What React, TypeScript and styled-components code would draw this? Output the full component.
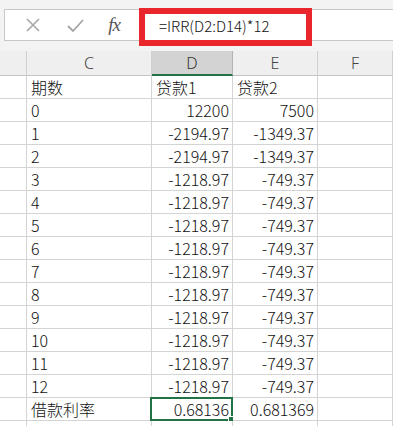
import React from "react";
import styled, { createGlobalStyle } from "styled-components";

const GlobalStyle = createGlobalStyle`
  html, body {
    margin: 0;
    padding: 0;
    background: #f3f3f3;
    font-family: "Noto Sans CJK SC", "Noto Sans", sans-serif;
  }
`;

const Page = styled.div`
  width: 393px;
  height: 426px;
  overflow: hidden;
  background: #f3f3f3;
  position: relative;
`;

const FormulaBar = styled.div`
  margin: 9px 0 0 4px;
  height: 30px;
  display: flex;
  align-items: center;
  background: #fff;
  border: 1px solid #c8c8c8;
  border-right: none;
`;

const IconSlot = styled.div<{ w: number }>`
  width: ${(p) => p.w}px;
  display: flex;
  justify-content: center;
  align-items: center;
  color: #a6a6a6;
`;

const Fx = styled.span`
  font-family: "Liberation Serif", "DejaVu Serif", serif;
  font-style: italic;
  font-size: 19px;
  color: #555;
  letter-spacing: -1px;
`;

const Formula = styled.div`
  padding-left: 21px;
  font-size: 15px;
  font-weight: 300;
  color: #111;
`;

const Highlight = styled.div`
  position: absolute;
  left: 139px;
  top: 8px;
  width: 161px;
  height: 26px;
  border: 6px solid #e8262b;
  pointer-events: none;
`;

const Sheet = styled.div`
  margin-top: 10px;
  display: grid;
  grid-template-columns: 27px 125px 81px 85px 75px;
`;

const Head = styled.div<{ active?: boolean }>`
  box-sizing: border-box;
  height: 25px;
  border-right: 1px solid ${(p) => (p.active ? "#b4b4b4" : "#d0d0d0")};
  border-bottom: ${(p) => (p.active ? "2px solid #217346" : "1px solid #c6c6c6")};
  background: ${(p) => (p.active ? "#d3d3d3" : "#efefef")};
  color: ${(p) => (p.active ? "#333" : "#444")};
  font-size: 16px;
  display: flex;
  align-items: center;
  justify-content: center;
  font-family: "Noto Sans", "Liberation Sans", sans-serif;
  font-weight: 300;
`;

const Cell = styled.div<{ right?: boolean }>`
  height: 23px;
  box-sizing: border-box;
  border-right: 1px solid #d4d4d4;
  border-bottom: 1px solid #d4d4d4;
  background: #fff;
  font-size: 16px;
  font-weight: 300;
  line-height: 22px;
  color: #111;
  padding: 0 3px 0 4px;
  text-align: ${(p) => (p.right ? "right" : "left")};
  white-space: nowrap;
  position: relative;
`;

const Selected = styled.div`
  position: absolute;
  inset: -1px -1px -1px -2px;
  border: 2px solid #217346;
  pointer-events: none;

  &::after {
    content: "";
    position: absolute;
    right: -4px;
    bottom: -4px;
    width: 5px;
    height: 5px;
    background: #217346;
    border: 1px solid #fff;
  }
`;

const rows: [string, string, string][] = [
  ["期数", "贷款1", "贷款2"],
  ["0", "12200", "7500"],
  ["1", "-2194.97", "-1349.37"],
  ["2", "-2194.97", "-1349.37"],
  ["3", "-1218.97", "-749.37"],
  ["4", "-1218.97", "-749.37"],
  ["5", "-1218.97", "-749.37"],
  ["6", "-1218.97", "-749.37"],
  ["7", "-1218.97", "-749.37"],
  ["8", "-1218.97", "-749.37"],
  ["9", "-1218.97", "-749.37"],
  ["10", "-1218.97", "-749.37"],
  ["11", "-1218.97", "-749.37"],
  ["12", "-1218.97", "-749.37"],
  ["借款利率", "0.68136", "0.681369"],
  ["", "", ""],
];

export default function App() {
  return (
    <Page>
      <GlobalStyle />
      <FormulaBar>
        <IconSlot w={55}>
          <svg width="14" height="14" viewBox="0 0 14 14">
            <path d="M1 1 L13 13 M13 1 L1 13" stroke="currentColor" strokeWidth="1.6" fill="none" />
          </svg>
        </IconSlot>
        <IconSlot w={30}>
          <svg width="17" height="13" viewBox="0 0 17 13">
            <path d="M1 7 L6 12 L16 1" stroke="currentColor" strokeWidth="1.8" fill="none" />
          </svg>
        </IconSlot>
        <IconSlot w={48}>
          <Fx>fx</Fx>
        </IconSlot>
        <Formula>=IRR(D2:D14)*12</Formula>
      </FormulaBar>
      <Highlight />
      <Sheet>
        <Head />
        <Head>C</Head>
        <Head active>D</Head>
        <Head>E</Head>
        <Head>F</Head>
        {rows.map((r, i) => {
          const numeric = i > 0;
          return (
            <React.Fragment key={i}>
              <Cell />
              <Cell>{r[0]}</Cell>
              <Cell right={numeric}>
                {r[1]}
                {i === 14 && <Selected />}
              </Cell>
              <Cell right={numeric}>{r[2]}</Cell>
              <Cell />
            </React.Fragment>
          );
        })}
      </Sheet>
    </Page>
  );
}
